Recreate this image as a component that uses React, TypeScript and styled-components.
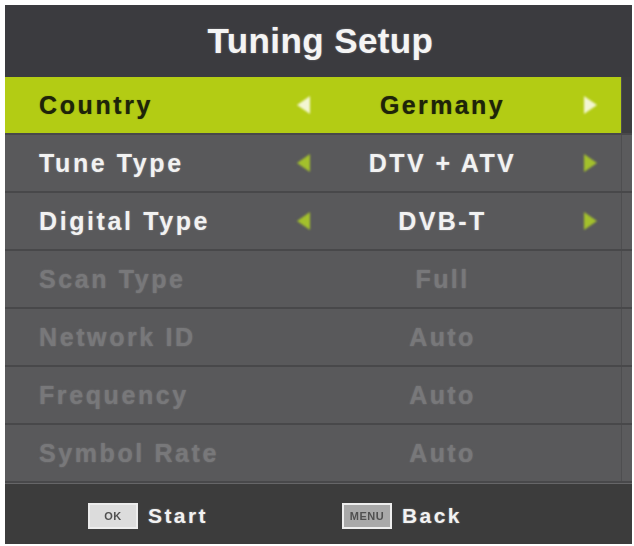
import React from "react";
import styled, { createGlobalStyle, css } from "styled-components";

const Global = createGlobalStyle`
  html, body { margin: 0; padding: 0; background: #ffffff; }
  body { font-family: "Liberation Sans", Arial, sans-serif; }
`;

const Panel = styled.div`
  margin: 5px 0 0 5px;
  width: 627px;
  height: 539px;
  display: flex;
  flex-direction: column;
  background: #59595b;
  box-shadow: inset 1px 0 0 #8c8c8c, inset -1px 0 0 #8c8c8c;
  overflow: hidden;
`;

const TitleBar = styled.div`
  height: 72px;
  flex: none;
  display: flex;
  align-items: center;
  justify-content: center;
  background: #3b3b3f;
  color: #f4f4f4;
  font-size: 35px;
  font-weight: 700;
  letter-spacing: 0.4px;
  padding-left: 4px;
  text-shadow: 0 0 2px rgba(255, 255, 255, 0.35);
`;

const Row = styled.div`
  height: 58px;
  flex: none;
  display: flex;
  box-sizing: border-box;
  border-bottom: 2px solid #48484a;
  box-shadow: 0 1px 0 #666668;
  position: relative;
`;

const RowMain = styled.div<{ $selected?: boolean }>`
  width: 616px;
  flex: none;
  display: grid;
  grid-template-columns: 280px 36px 251px 36px 1fr;
  align-items: center;
  background: ${(p) => (p.$selected ? "#b3cc14" : "#59595b")};
`;

const Gutter = styled.div<{ $selected?: boolean }>`
  flex: 1;
  background: ${(p) => (p.$selected ? "#3d3d3f" : "#5b5b5d")};
  box-shadow: inset 1px 0 0 #4e4e50;
`;

type Tone = "selected" | "normal" | "disabled";

const textTone = (tone: Tone) => {
  if (tone === "selected") return css`color: #1e2409; text-shadow: 0 0 1px rgba(30, 36, 9, 0.6);`;
  if (tone === "disabled") return css`color: #78787a; text-shadow: 0 0 2px rgba(150, 150, 150, 0.45);`;
  return css`color: #f2f2f2; text-shadow: 0 0 2px rgba(255, 255, 255, 0.35);`;
};

const Label = styled.div<{ $tone: Tone }>`
  padding-left: 34px;
  font-size: 25px;
  font-weight: 700;
  letter-spacing: 2.6px;
  white-space: nowrap;
  ${(p) => textTone(p.$tone)}
`;

const Value = styled.div<{ $tone: Tone }>`
  text-align: center;
  padding-right: 8px;
  font-size: 25px;
  font-weight: 700;
  letter-spacing: 2.4px;
  white-space: nowrap;
  ${(p) => textTone(p.$tone)}
`;

const ArrowCell = styled.div`
  display: flex;
  align-items: center;
  justify-content: center;
`;

const Arrow = styled.span<{ $dir: "left" | "right"; $light?: boolean }>`
  width: 0;
  height: 0;
  border-top: 9px solid transparent;
  border-bottom: 9px solid transparent;
  ${(p) =>
    p.$dir === "left"
      ? css`border-right: 13px solid ${p.$light ? "#f3f6d2" : "#a3c02c"};`
      : css`border-left: 13px solid ${p.$light ? "#f3f6d2" : "#a3c02c"};`}
  filter: blur(0.8px);
`;

const Footer = styled.div`
  flex: 1;
  display: flex;
  align-items: center;
  padding-left: 83px;
  background: #3c3c3c;
`;

const Hint = styled.div<{ $width?: number }>`
  display: flex;
  align-items: center;
  gap: 10px;
  width: ${(p) => (p.$width ? `${p.$width}px` : "auto")};
  margin-top: 4px;
`;

const KeyCap = styled.span<{ $outlined?: boolean }>`
  width: 50px;
  height: 26px;
  box-sizing: border-box;
  display: flex;
  align-items: center;
  justify-content: center;
  font-size: 11px;
  font-weight: 700;
  letter-spacing: 0.5px;
  color: #505050;
  background: ${(p) => (p.$outlined ? "#a9a9a9" : "#dcdcdc")};
  border: 2px solid ${(p) => (p.$outlined ? "#eeeeee" : "#ececec")};
  filter: blur(0.5px);
`;

const HintText = styled.span`
  color: #f2f2f2;
  font-size: 21px;
  font-weight: 700;
  letter-spacing: 2.4px;
  text-shadow: 0 0 2px rgba(255, 255, 255, 0.35);
`;

type Item = { label: string; value: string; state: Tone };

const items: Item[] = [
  { label: "Country", value: "Germany", state: "selected" },
  { label: "Tune Type", value: "DTV + ATV", state: "normal" },
  { label: "Digital Type", value: "DVB-T", state: "normal" },
  { label: "Scan Type", value: "Full", state: "disabled" },
  { label: "Network ID", value: "Auto", state: "disabled" },
  { label: "Frequency", value: "Auto", state: "disabled" },
  { label: "Symbol Rate", value: "Auto", state: "disabled" },
];

export default function App() {
  return (
    <>
      <Global />
      <Panel>
        <TitleBar>Tuning Setup</TitleBar>
        {items.map((it) => {
          const sel = it.state === "selected";
          const arrows = it.state !== "disabled";
          return (
            <Row key={it.label}>
              <RowMain $selected={sel}>
                <Label $tone={it.state}>{it.label}</Label>
                <ArrowCell>{arrows && <Arrow $dir="left" $light={sel} />}</ArrowCell>
                <Value $tone={it.state}>{it.value}</Value>
                <ArrowCell>{arrows && <Arrow $dir="right" $light={sel} />}</ArrowCell>
                <div />
              </RowMain>
              <Gutter $selected={sel} />
            </Row>
          );
        })}
        <Footer>
          <Hint $width={254}>
            <KeyCap>OK</KeyCap>
            <HintText>Start</HintText>
          </Hint>
          <Hint>
            <KeyCap $outlined>MENU</KeyCap>
            <HintText>Back</HintText>
          </Hint>
        </Footer>
      </Panel>
    </>
  );
}
